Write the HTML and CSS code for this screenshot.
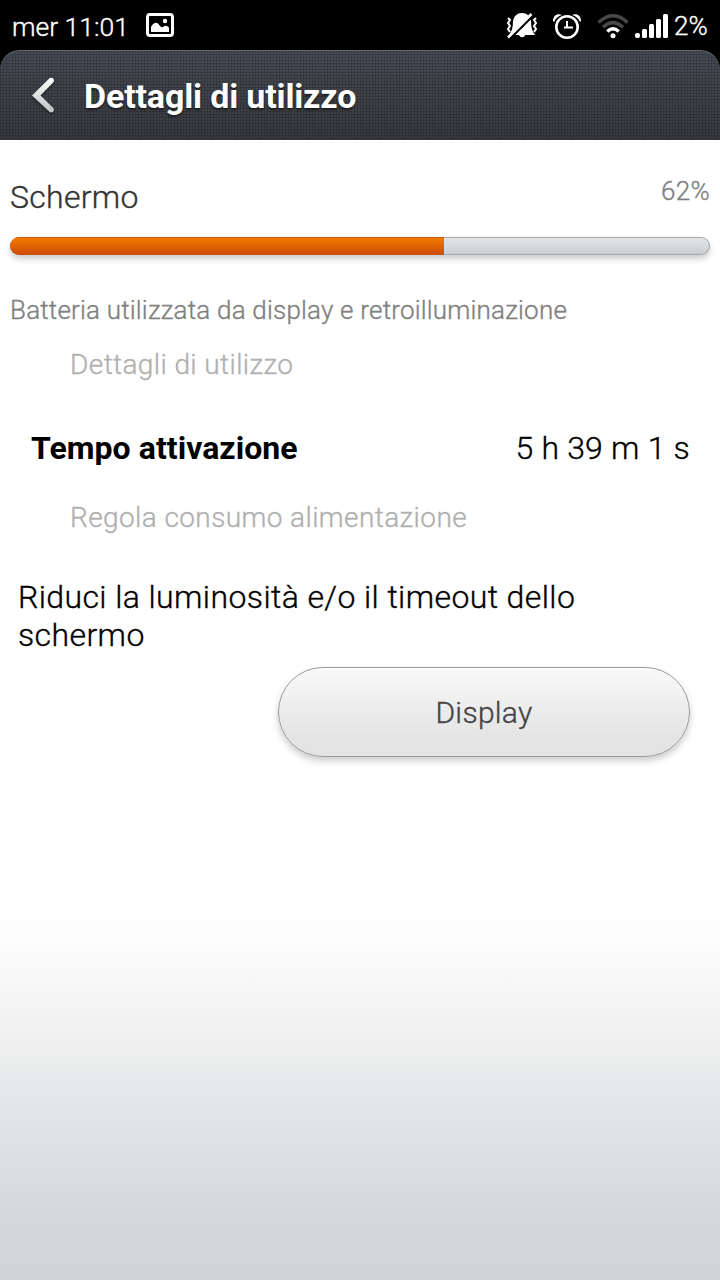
FILE: index.html
```html
<!DOCTYPE html>
<html lang="it">
<head>
  <meta charset="utf-8">
  <title>Dettagli di utilizzo</title>
  <link rel="stylesheet" href="styles.css">
</head>
<body>
  <div class="status-bar">
    <span class="clock">mer 11:01</span>
    <svg class="icon-picture" width="28" height="24" viewBox="0 0 28 24">
      <rect x="1.5" y="1.5" width="25" height="21" rx="2.5" fill="none" stroke="#fff" stroke-width="3"/>
      <path d="M5 19v-5q3-5 6-4 1 0 3 3 2 2 3 1 2-2 4-1 2 1 2 2v4z" fill="#fff"/>
      <circle cx="19" cy="8" r="2.200" fill="#fff"/>
    </svg>
    <div class="status-icons">
      <svg class="icon-silent" width="32" height="26" viewBox="0 0 32 26">
        <path d="M16 0c5 0 8 3 9 8 0 6 1 10 4 14H19c-.5 3-5 3-6 0H3c3-4 4-8 4-14 1-5 4-8 9-8z" fill="#fff"/>
        <path d="M3.500 26L28 1.500" stroke="#000" stroke-width="2.600"/>
        <path d="M2 24.500L25.500 1" stroke="#fff" stroke-width="2.600"/>
        <path d="M2 5l2 2-2 3 2 3-2 3 2 3M30 5l-2 2 2 3-2 3 2 3-2 3" fill="none" stroke="#fff" stroke-width="2"/>
      </svg>
      <svg class="icon-alarm" width="28" height="25" viewBox="0 0 28 25">
        <circle cx="14" cy="13" r="10.700" fill="none" stroke="#fff" stroke-width="2.600"/>
        <path d="M14 7v6.500h6M11 13.500h3" fill="none" stroke="#fff" stroke-width="2"/>
        <path d="M0 7C0 2 4-1 9 1 5 2 3 4 1 8zM28 7C28 2 24-1 19 1c4 1 6 3 8 7z" fill="#fff"/>
      </svg>
      <svg class="icon-wifi" width="32" height="25" viewBox="0 0 32 25">
        <path d="M1.500 8.500Q16-5 30.500 8.500" fill="none" stroke="#484848" stroke-width="3.400"/>
        <path d="M6 13.200Q16 4 26 13.200" fill="none" stroke="#484848" stroke-width="3.400"/>
        <path d="M10.300 17.500Q16 12 21.700 17.500" fill="none" stroke="#fff" stroke-width="3.400"/>
        <circle cx="16" cy="21.800" r="2.500" fill="#fff"/>
      </svg>
      <svg class="icon-signal" width="33" height="24" viewBox="0 0 33 24">
        <g fill="#fff">
          <rect x="0" y="19" width="5" height="5" rx="2"/>
          <rect x="7" y="15" width="5" height="9" rx="1.500"/>
          <rect x="14" y="10" width="5" height="14" rx="1.500"/>
          <rect x="21" y="5" width="5" height="19" rx="1.500"/>
          <rect x="28" y="0" width="5" height="24" rx="1.500"/>
        </g>
      </svg>
      <span class="battery">2%</span>
    </div>
  </div>

  <header>
    <svg class="back" width="24" height="38" viewBox="0 0 24 38">
      <defs>
        <linearGradient id="back-fill" x1="0" y1="0" x2="0" y2="1">
          <stop offset="0" stop-color="#fff"/>
          <stop offset="1" stop-color="#bfc0c1"/>
        </linearGradient>
      </defs>
      <path d="M0 18.500L17.500 1.300c1.500-1.300 4.500-.3 4.500 2.200 0 .8-.2 1.300-.8 1.900L8.500 18.500l12.700 12.400c.6.600.8 1.200.8 1.900 0 2.400-3 3.500-4.600 2z" fill="url(#back-fill)"/>
    </svg>
    <h1>Dettagli di utilizzo</h1>
  </header>

  <main>
    <div class="usage">
      <h2>Schermo</h2>
      <span class="percent">62%</span>
    </div>
    <div class="progress">
      <div class="progress-bar" style="width: 62%"></div>
    </div>
    <p class="summary">Batteria utilizzata da display e retroilluminazione</p>
    <h3>Dettagli di utilizzo</h3>
    <div class="detail">
      <span class="detail-name">Tempo attivazione</span>
      <span class="detail-value">5 h 39 m 1 s</span>
    </div>
    <h3 class="adjust">Regola consumo alimentazione</h3>
    <p class="hint">Riduci la luminosità e/o il timeout dello schermo</p>
    <button type="button">Display</button>
  </main>
</body>
</html>
```

FILE: styles.css
```css
* {
  box-sizing: border-box;
  margin: 0;
  padding: 0;
}
body {
  height: 1280px;
  background-color: #000;
  font-family: Roboto, sans-serif;
  font-weight: 300;
  -webkit-text-stroke-width: 0.35px;
  display: flex;
  flex-direction: column;
  overflow: hidden;
}
svg {
  display: block;
  flex: none;
}
.status-bar {
  height: 50px;
  padding: 0 12px;
  display: flex;
  align-items: center;
  color: #fff;
  white-space: nowrap;
}
.clock {
  font-size: 26.5px;
  line-height: 32px;
  padding-top: 3px;
  width: 134px;
}
.status-icons {
  display: flex;
  align-items: center;
  margin-left: auto;
  padding-top: 2px;
}
.icon-alarm {
  margin-left: 15px;
}
.icon-wifi {
  margin-left: 16px;
}
.icon-signal {
  margin-left: 6px;
}
.battery {
  font-size: 26px;
  line-height: 32px;
  width: 34px;
  margin-left: 6px;
}
header {
  height: 90px;
  padding-left: 32px;
  display: flex;
  align-items: center;
  border-top: 1px solid #6a6c70;
  border-radius: 20px 20px 0 0;
  background-image:
    repeating-linear-gradient(to right, rgba(0, 0, 0, 0.15) 0 1px, transparent 1px 3px),
    repeating-linear-gradient(to bottom, rgba(0, 0, 0, 0.15) 0 1px, transparent 1px 3px),
    linear-gradient(#464a53, #37393e);
}
.back {
  margin-right: 28px;
  filter: drop-shadow(0 2px 1px rgba(0, 0, 0, 0.4));
}
h1 {
  font-size: 34px;
  line-height: 40px;
  letter-spacing: -0.15px;
  -webkit-text-stroke-width: 0;
  color: #fff;
  text-shadow: 0 2px 2px rgba(0, 0, 0, 0.5);
}
main {
  flex: 1;
  padding: 36px 10px 0;
  background: linear-gradient(#fff 0, #fff 765px, #fdfdfd 795px, #f5f5f5 860px, #ebedec 925px, #e9eaec 935px, #e0e1e3 1000px, #d8d9db 1065px, #d1d2d4 1140px);
}
.usage {
  display: flex;
  justify-content: space-between;
  height: 61px;
}
h2 {
  font-size: 32px;
  line-height: 42px;
  letter-spacing: 0.3px;
  font-weight: 300;
  color: #333;
}
.percent {
  font-size: 26px;
  line-height: 30px;
  letter-spacing: 0.3px;
  color: #808080;
}
.progress {
  height: 18px;
  border-radius: 9px;
  overflow: hidden;
  background: linear-gradient(#e5e8eb, #c8cbcf);
  box-shadow: inset 0 0 0 1px #aaa, 0 4px 6px rgba(0, 0, 0, 0.2);
}
.progress-bar {
  height: 100%;
  background: linear-gradient(#f57c00, #cc4b00);
  box-shadow: inset 0 1px #cd5a10;
}
.summary {
  margin-top: 39px;
  font-size: 26px;
  line-height: 32px;
  letter-spacing: 0.2px;
  color: #808080;
}
h3 {
  padding-left: 60px;
  margin-top: 22px;
  font-size: 28px;
  line-height: 34px;
  letter-spacing: 0.4px;
  font-weight: 300;
  color: #b0b0b0;
}
.detail {
  display: flex;
  justify-content: space-between;
  margin-top: 46px;
  padding: 0 20px 0 21px;
  font-size: 32px;
  line-height: 40px;
}
.detail-name {
  font-weight: 700;
  letter-spacing: 0.05px;
  -webkit-text-stroke-width: 0;
}
.detail-value {
  letter-spacing: 0.2px;
}
.adjust {
  margin-top: 33px;
}
.hint {
  margin-top: 43px;
  padding-left: 8px;
  width: 600px;
  font-size: 32px;
  line-height: 38px;
  letter-spacing: 0.4px;
}
button {
  display: block;
  width: 412px;
  height: 90px;
  margin: 13px 20px 0 auto;
  border: 1px solid #999;
  border-radius: 45px;
  background: linear-gradient(#f9f9f9, #eee 40%, #e4e4e4 80%, #e4e4e4);
  box-shadow: inset 0 1px #fff, 0 4px 7px rgba(0, 0, 0, 0.2);
  font: inherit;
  font-size: 30px;
  letter-spacing: 0.3px;
  color: #444;
}
```
